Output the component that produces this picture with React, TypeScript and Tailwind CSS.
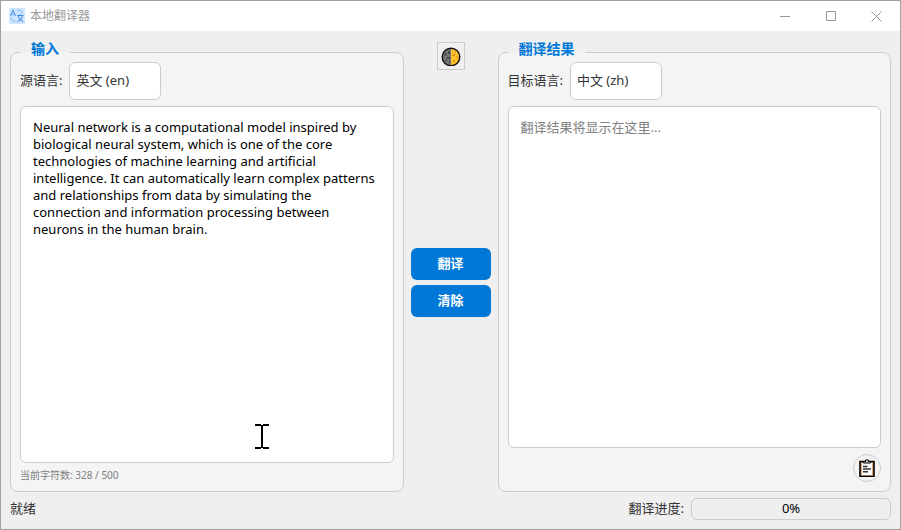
import { useState } from 'react';

const MAX_CHARS = 500;

const SAMPLE_TEXT =
  'Neural network is a computational model inspired by biological neural system, which is one of the core technologies of machine learning and artificial intelligence. It can automatically learn complex patterns and relationships from data by simulating the connection and information processing between neurons in the human brain.';

const AppIcon = () => (
  <svg width="16" height="16" viewBox="0 0 16 16" fill="none" aria-hidden="true">
    <rect width="16" height="16" fill="#cfe4fd" />
    <path d="M1.5 8 4 2.200 6.500 8M2.400 6.200h3.200" stroke="#5b9fea" strokeWidth="1.100" />
    <path d="M8.500 2.200c2.500-.6 4.600.7 4.800 3.300M2.200 9.500c0 2.300 1.600 4 4.300 4" stroke="#7fb6f2" />
    <path d="M8 7.500h6.500M11.200 6v1.500M9.300 8c.5 2.800 2.500 4.800 5 5.500M13.200 8c-.5 2.800-2.400 4.800-5 5.500" stroke="#4590e6" strokeWidth="1.100" />
  </svg>
);

const MoonIcon = () => (
  <svg width="20" height="20" viewBox="0 0 20 20" aria-hidden="true">
    <circle cx="10" cy="11" r="8.500" fill="#747474" />
    <path d="M10 2.500a8.500 8.500 0 0 1 0 17z" fill="#ffc12e" />
    <path d="M7 5h2v3H7zM3.500 7.500h2v2h-2zM6 11h3v2H6zM4 14h2v1H4zM8 15h1v2H8z" fill="#444" />
    <path d="M11 8h3v2h-3zM15.500 10h2v2h-2zM12 14h2v2h-2zM14 5h1v2h-1z" fill="#e09a18" />
    <circle cx="10" cy="11" r="8.800" fill="none" stroke="#111" strokeWidth="1.400" />
  </svg>
);

const ClipboardIcon = () => (
  <svg width="16" height="18" viewBox="0 0 16 18" aria-hidden="true">
    <path d="M1 2.500h14v15H1z" fill="#d9a87c" stroke="#000" strokeWidth="1.600" />
    <path d="M3 4h10v12H3z" fill="#fafafa" />
    <path d="M4.500 4V2.500h2V1h3v1.500h2V4z" fill="#cfcfcf" stroke="#000" />
    <path d="M4 7.500h4.500M4 10h8M4 12.700h5" stroke="#333" strokeWidth="1.400" />
  </svg>
);

const TextCursor = () => (
  <svg width="14" height="25" viewBox="0 0 14 25" shapeRendering="crispEdges" aria-hidden="true">
    <path d="M0 0h6v1h2V0h6v2H8v21h6v2H8v-1H6v1H0v-2h6V2H0z" />
  </svg>
);

const App = () => {
  const [input, setInput] = useState(SAMPLE_TEXT);
  const [result, setResult] = useState('');
  const [source, setSource] = useState('en');
  const [target, setTarget] = useState('zh');

  const handleClear = () => {
    setInput('');
    setResult('');
  };

  return (
    <div className="flex min-h-screen flex-col border border-[#a0a0a0] bg-[#efefef] font-['Noto_Sans','Noto_Sans_CJK_SC',sans-serif] text-[13px] text-[#333333]">
      {/* Title bar */}
      <header className="flex h-[30px] items-center bg-white pl-2 text-[#999999]">
        <AppIcon />
        <h1 className="ml-[5px] flex-1 text-xs">本地翻译器</h1>
        <button type="button" aria-label="最小化" className="flex h-7 w-[46px] items-center justify-center">
          <svg width="10" height="10" viewBox="0 0 10 10" stroke="currentColor">
            <path d="M0 5.500h10" />
          </svg>
        </button>
        <button type="button" aria-label="最大化" className="flex h-7 w-[45px] items-center justify-center">
          <svg width="10" height="10" viewBox="0 0 10 10" fill="none" stroke="currentColor">
            <path d="M.5.5h9v9h-9z" />
          </svg>
        </button>
        <button type="button" aria-label="关闭" className="flex h-7 w-[47px] items-center justify-center">
          <svg width="11" height="11" viewBox="0 0 11 11" stroke="currentColor">
            <path d="M.5.5l10 10M10.500.5l-10 10" />
          </svg>
        </button>
      </header>

      <main className="flex flex-1 px-[9px] pt-3">
        {/* Input */}
        <fieldset className="flex min-w-0 flex-1 flex-col rounded-lg border border-[#cccccc] bg-[#f4f4f4] px-[9px] pt-px pb-[9px]">
          <legend className="pr-2.5 pb-1.5 pl-[11px] text-sm leading-3 font-bold text-[#0078d7]">输入</legend>
          <div className="flex items-center gap-[7px]">
            <label htmlFor="source">源语言:</label>
            <select
              id="source"
              value={source}
              onChange={(e) => setSource(e.target.value)}
              className="h-[38px] w-[92px] appearance-none rounded-md border border-[#cccccc] bg-white px-1.5"
            >
              <option value="en">英文 (en)</option>
              <option value="zh">中文 (zh)</option>
            </select>
          </div>
          <div className="relative mt-1.5 flex flex-1">
            <textarea
              aria-label="输入"
              value={input}
              maxLength={MAX_CHARS}
              onChange={(e) => setInput(e.target.value)}
              className="w-full resize-none rounded-md border border-[#cccccc] bg-white px-3 py-3 leading-[17px] text-black"
            />
            <div className="pointer-events-none absolute bottom-3.5 left-[235px]">
              <TextCursor />
            </div>
          </div>
          <p className="mt-1.5 text-[10px] leading-[13px] text-[#808080]">
            当前字符数: {input.length} / {MAX_CHARS}
          </p>
        </fieldset>

        {/* Actions */}
        <div className="flex w-[94px] flex-col items-center px-[7px]">
          <button
            type="button"
            aria-label="切换主题"
            className="-mt-px flex h-7 w-7 items-center justify-center border border-[#cccccc] bg-[#f0f0f0]"
          >
            <MoonIcon />
          </button>
          <div className="flex w-full flex-1 flex-col justify-center gap-[5px] pt-0.5">
            <button type="button" className="h-8 rounded-md bg-[#0078d7] font-bold text-white">
              翻译
            </button>
            <button type="button" onClick={handleClear} className="h-8 rounded-md bg-[#0078d7] font-bold text-white">
              清除
            </button>
          </div>
        </div>

        {/* Result */}
        <fieldset className="flex min-w-0 flex-1 flex-col rounded-lg border border-[#cccccc] bg-[#f4f4f4] px-[9px] pt-px pb-[9px]">
          <legend className="pr-2.5 pb-1.5 pl-[11px] text-sm leading-3 font-bold text-[#0078d7]">翻译结果</legend>
          <div className="flex items-center gap-[7px]">
            <label htmlFor="target">目标语言:</label>
            <select
              id="target"
              value={target}
              onChange={(e) => setTarget(e.target.value)}
              className="h-[38px] w-[92px] appearance-none rounded-md border border-[#cccccc] bg-white px-1.5"
            >
              <option value="zh">中文 (zh)</option>
              <option value="en">英文 (en)</option>
            </select>
          </div>
          <textarea
            aria-label="翻译结果"
            readOnly
            value={result}
            placeholder="翻译结果将显示在这里..."
            className="mt-1.5 w-full flex-1 resize-none rounded-md border border-[#cccccc] bg-white px-3 py-3 leading-[17px] text-black placeholder:text-[#808080]"
          />
          <button
            type="button"
            aria-label="复制"
            className="mt-1.5 flex h-7 w-7 items-center justify-center self-end rounded-full border border-[#cccccc]"
          >
            <ClipboardIcon />
          </button>
        </fieldset>
      </main>

      {/* Status bar */}
      <footer className="flex items-center px-[9px] pt-1.5 pb-[9px]">
        <span className="flex-1">就绪</span>
        <span id="progress-label" className="mr-[7px]">翻译进度:</span>
        <div
          role="progressbar"
          aria-labelledby="progress-label"
          aria-valuenow={0}
          aria-valuemin={0}
          aria-valuemax={100}
          className="flex h-[22px] w-[200px] items-center justify-center rounded-md border border-[#cccccc] text-black"
        >
          0%
        </div>
      </footer>
    </div>
  );
};

export default App;
